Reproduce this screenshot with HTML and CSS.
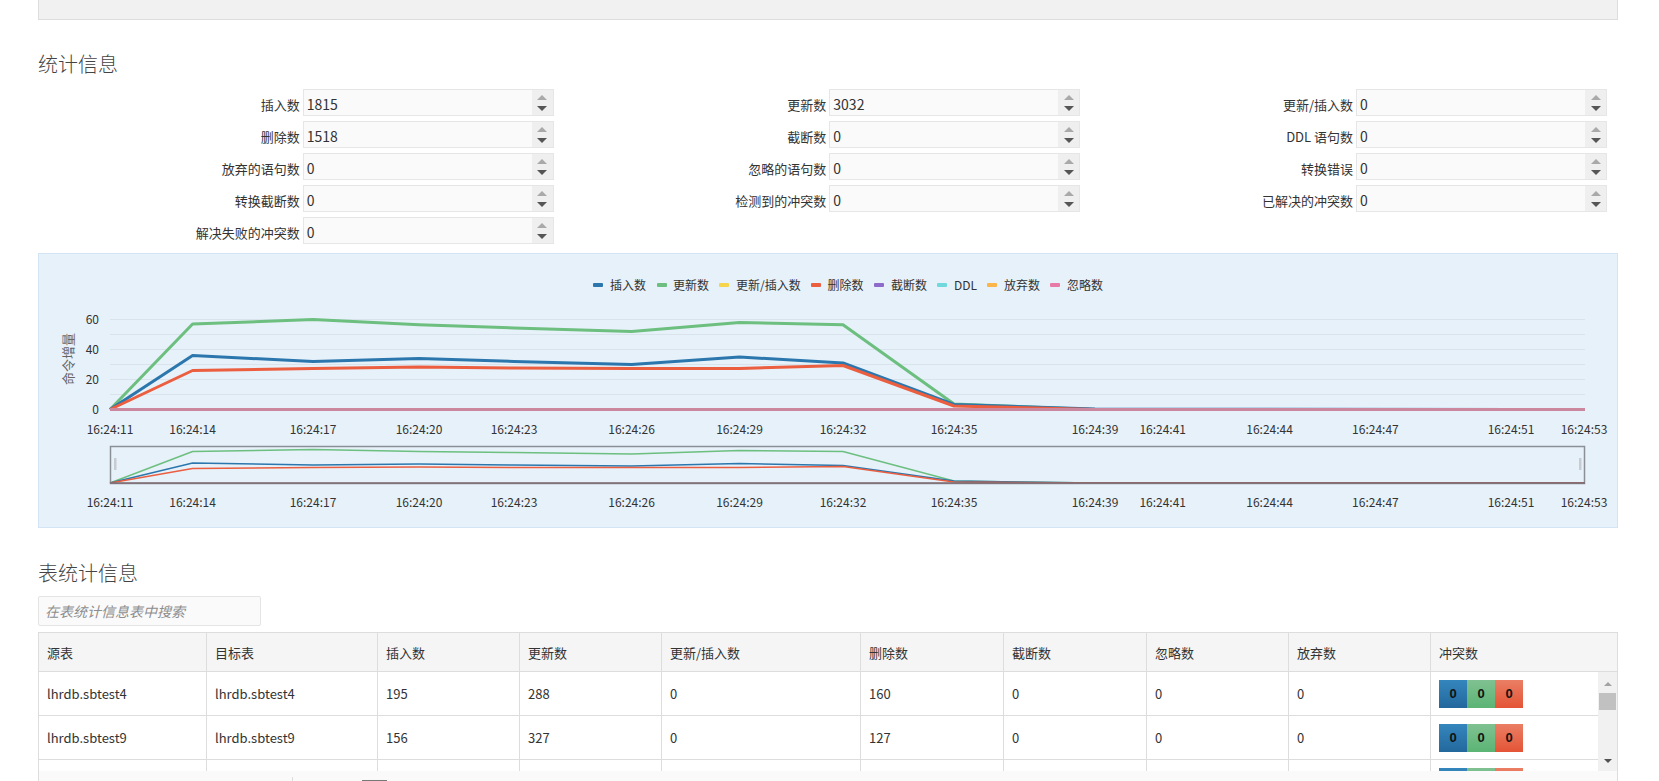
FILE: index.html
```html
<!DOCTYPE html>
<html lang="zh-CN">
<head>
<meta charset="utf-8">
<title>统计信息</title>
<link rel="stylesheet" href="styles.css">
</head>
<body>
<div class="page">
  <div class="topbox"></div>

  <h3 class="section-title title-stats">统计信息</h3>

  <div class="stats-grid">
    <div class="stats-col">
      <div class="stat-row"><span class="stat-label">插入数</span><div class="num-box"><span class="num-val">1815</span><span class="spin"><i class="up"></i><i class="down"></i></span></div></div>
      <div class="stat-row"><span class="stat-label">删除数</span><div class="num-box"><span class="num-val">1518</span><span class="spin"><i class="up"></i><i class="down"></i></span></div></div>
      <div class="stat-row"><span class="stat-label">放弃的语句数</span><div class="num-box"><span class="num-val">0</span><span class="spin"><i class="up"></i><i class="down"></i></span></div></div>
      <div class="stat-row"><span class="stat-label">转换截断数</span><div class="num-box"><span class="num-val">0</span><span class="spin"><i class="up"></i><i class="down"></i></span></div></div>
      <div class="stat-row"><span class="stat-label">解决失败的冲突数</span><div class="num-box"><span class="num-val">0</span><span class="spin"><i class="up"></i><i class="down"></i></span></div></div>
    </div>
    <div class="stats-col">
      <div class="stat-row"><span class="stat-label">更新数</span><div class="num-box"><span class="num-val">3032</span><span class="spin"><i class="up"></i><i class="down"></i></span></div></div>
      <div class="stat-row"><span class="stat-label">截断数</span><div class="num-box"><span class="num-val">0</span><span class="spin"><i class="up"></i><i class="down"></i></span></div></div>
      <div class="stat-row"><span class="stat-label">忽略的语句数</span><div class="num-box"><span class="num-val">0</span><span class="spin"><i class="up"></i><i class="down"></i></span></div></div>
      <div class="stat-row"><span class="stat-label">检测到的冲突数</span><div class="num-box"><span class="num-val">0</span><span class="spin"><i class="up"></i><i class="down"></i></span></div></div>
    </div>
    <div class="stats-col">
      <div class="stat-row"><span class="stat-label">更新/插入数</span><div class="num-box"><span class="num-val">0</span><span class="spin"><i class="up"></i><i class="down"></i></span></div></div>
      <div class="stat-row"><span class="stat-label">DDL 语句数</span><div class="num-box"><span class="num-val">0</span><span class="spin"><i class="up"></i><i class="down"></i></span></div></div>
      <div class="stat-row"><span class="stat-label">转换错误</span><div class="num-box"><span class="num-val">0</span><span class="spin"><i class="up"></i><i class="down"></i></span></div></div>
      <div class="stat-row"><span class="stat-label">已解决的冲突数</span><div class="num-box"><span class="num-val">0</span><span class="spin"><i class="up"></i><i class="down"></i></span></div></div>
    </div>
  </div>

  <div class="chart-panel">
    <svg class="chart" width="1578" height="273" viewBox="39 254 1578 273" xmlns="http://www.w3.org/2000/svg">
      <g class="legend">
        <rect x="593" y="283" width="10" height="4" rx="1" fill="#2b77ad"/><text x="610" y="289.5">插入数</text>
        <rect x="657" y="283" width="10" height="4" rx="1" fill="#6cbf7f"/><text x="673" y="289.5">更新数</text>
        <rect x="719" y="283" width="10" height="4" rx="1" fill="#f6d44c"/><text x="736" y="289.5">更新/插入数</text>
        <rect x="811" y="283" width="10" height="4" rx="1" fill="#eb5e3f"/><text x="827.5" y="289.5">删除数</text>
        <rect x="874" y="283" width="10" height="4" rx="1" fill="#8e6bcb"/><text x="891" y="289.5">截断数</text>
        <rect x="937" y="283" width="10" height="4" rx="1" fill="#70d9dc"/><text x="954" y="289.5">DDL</text>
        <rect x="987" y="283" width="10" height="4" rx="1" fill="#fbb54b"/><text x="1004" y="289.5">放弃数</text>
        <rect x="1050" y="283" width="10" height="4" rx="1" fill="#e87aa7"/><text x="1067" y="289.5">忽略数</text>
      </g>
      <g stroke="#d9e3ec" stroke-width="1">
        <line x1="110" y1="319.5" x2="1585" y2="319.5"/>
        <line x1="110" y1="334.5" x2="1585" y2="334.5"/>
        <line x1="110" y1="349.5" x2="1585" y2="349.5"/>
        <line x1="110" y1="364.5" x2="1585" y2="364.5"/>
        <line x1="110" y1="379.5" x2="1585" y2="379.5"/>
        <line x1="110" y1="394.5" x2="1585" y2="394.5"/>
      </g>
      <g class="ylab">
        <text x="99" y="324">60</text>
        <text x="99" y="354">40</text>
        <text x="99" y="384">20</text>
        <text x="99" y="414">0</text>
      </g>
      <text class="yname" transform="translate(73 359) rotate(-90)">命令增量</text>
      <g fill="none" stroke-linejoin="round" stroke-width="3">
        <polyline stroke="#6cbf7f" points="110,409.5 192.6,324 313,319.5 419,324.8 514,328 631.6,331.5 739.5,322.5 843,324.8 954,404 1095,409.5 1585,409.5"/>
        <polyline stroke="#2b77ad" points="110,409.5 192.6,355.5 313,361.5 419,358.5 514,361.5 631.6,364.5 739.5,357 843,363 954,404.5 1095,409 1585,409.5"/>
        <polyline stroke="#eb5e3f" points="110,409.5 192.6,370.5 313,368.5 419,367 514,368 631.6,368.5 739.5,368.5 843,365.5 954,406 1095,409.5 1585,409.5"/>
        <line x1="110" y1="409.5" x2="1585" y2="409.5" stroke="#cb879d"/>
      </g>
      <g class="xlab">
        <text x="110" y="434">16:24:11</text>
        <text x="192.6" y="434">16:24:14</text>
        <text x="313" y="434">16:24:17</text>
        <text x="419" y="434">16:24:20</text>
        <text x="514" y="434">16:24:23</text>
        <text x="631.6" y="434">16:24:26</text>
        <text x="739.5" y="434">16:24:29</text>
        <text x="843" y="434">16:24:32</text>
        <text x="954" y="434">16:24:35</text>
        <text x="1095" y="434">16:24:39</text>
        <text x="1162.7" y="434">16:24:41</text>
        <text x="1269.6" y="434">16:24:44</text>
        <text x="1375.4" y="434">16:24:47</text>
        <text x="1511" y="434">16:24:51</text>
        <text x="1584" y="434">16:24:53</text>
      </g>
      <g fill="none" stroke-width="1.5" stroke-linejoin="round">
        <polyline stroke="#6cbf7f" points="110,483 192.6,451.5 313,449.5 419,451.5 514,452.5 631.6,454 739.5,450.5 843,451.5 954,481 1095,483 1585,483"/>
        <polyline stroke="#2b77ad" points="110,483 192.6,463 313,465 419,464 514,465 631.6,466 739.5,463.5 843,465.5 954,481 1095,483 1585,483"/>
        <polyline stroke="#eb5e3f" points="110,483 192.6,468.5 313,467.5 419,467 514,467.5 631.6,467.5 739.5,467.5 843,466.5 954,482 1095,483 1585,483"/>
      </g>
      <rect x="110.5" y="446.5" width="1474" height="37" fill="none" stroke="#8b9096" stroke-width="1.5"/>
      <line x1="110" y1="483" x2="1585" y2="483" stroke="#7e6a70" stroke-width="1.5"/>
      <rect x="114" y="458" width="2.5" height="12" fill="#c8ccd1"/>
      <rect x="1579" y="458" width="2.5" height="12" fill="#c8ccd1"/>
      <g class="xlab">
        <text x="110" y="507">16:24:11</text>
        <text x="192.6" y="507">16:24:14</text>
        <text x="313" y="507">16:24:17</text>
        <text x="419" y="507">16:24:20</text>
        <text x="514" y="507">16:24:23</text>
        <text x="631.6" y="507">16:24:26</text>
        <text x="739.5" y="507">16:24:29</text>
        <text x="843" y="507">16:24:32</text>
        <text x="954" y="507">16:24:35</text>
        <text x="1095" y="507">16:24:39</text>
        <text x="1162.7" y="507">16:24:41</text>
        <text x="1269.6" y="507">16:24:44</text>
        <text x="1375.4" y="507">16:24:47</text>
        <text x="1511" y="507">16:24:51</text>
        <text x="1584" y="507">16:24:53</text>
      </g>
    </svg>
  </div>

  <h3 class="section-title title-table">表统计信息</h3>
  <input class="search" type="text" placeholder="在表统计信息表中搜索">

  <div class="table-wrap">
    <div class="thead">
      <div class="th c1">源表</div>
      <div class="th c2">目标表</div>
      <div class="th c3">插入数</div>
      <div class="th c4">更新数</div>
      <div class="th c5">更新/插入数</div>
      <div class="th c6">删除数</div>
      <div class="th c7">截断数</div>
      <div class="th c8">忽略数</div>
      <div class="th c9">放弃数</div>
      <div class="th c10">冲突数</div>
    </div>
    <div class="tbody">
      <div class="rows">
        <div class="tr">
          <div class="td c1">lhrdb.sbtest4</div><div class="td c2">lhrdb.sbtest4</div><div class="td c3">195</div><div class="td c4">288</div><div class="td c5">0</div><div class="td c6">160</div><div class="td c7">0</div><div class="td c8">0</div><div class="td c9">0</div>
          <div class="td c10b"><span class="badge b-blue">0</span><span class="badge b-green">0</span><span class="badge b-red">0</span></div>
        </div>
        <div class="tr">
          <div class="td c1">lhrdb.sbtest9</div><div class="td c2">lhrdb.sbtest9</div><div class="td c3">156</div><div class="td c4">327</div><div class="td c5">0</div><div class="td c6">127</div><div class="td c7">0</div><div class="td c8">0</div><div class="td c9">0</div>
          <div class="td c10b"><span class="badge b-blue">0</span><span class="badge b-green">0</span><span class="badge b-red">0</span></div>
        </div>
        <div class="tr">
          <div class="td c1"></div><div class="td c2"></div><div class="td c3"></div><div class="td c4"></div><div class="td c5"></div><div class="td c6"></div><div class="td c7"></div><div class="td c8"></div><div class="td c9"></div>
          <div class="td c10b"><span class="badge b-blue"></span><span class="badge b-green"></span><span class="badge b-red"></span></div>
        </div>
      </div>
      <div class="vscroll">
        <i class="sc-up"></i>
        <span class="sc-thumb"></span>
        <span class="sc-space"></span>
        <i class="sc-down"></i>
      </div>
    </div>
    <div class="tfoot">
      <div class="tfoot-left"></div>
      <div class="tfoot-box"></div>
    </div>
  </div>
</div>
</body>
</html>
```

FILE: styles.css
```css
html, body {
  margin: 0;
  padding: 0;
  background: #ffffff;
}
body {
  font-family: "Noto Sans CJK SC", "Noto Sans", sans-serif;
  color: #333333;
  height: 781px;
  overflow: hidden;
}
.page {
  width: 1580px;
  margin-left: 38px;
}
.topbox {
  height: 20px;
  background: #f1f1f1;
  border: 1px solid #dddddd;
  border-top: none;
  box-sizing: border-box;
}
.section-title {
  margin: 0;
  font-size: 20px;
  line-height: 28px;
  font-weight: 300;
  color: #444444;
}
.title-stats {
  margin-top: 30px;
}
.stats-grid {
  display: grid;
  grid-template-columns: 1fr 1fr 1fr;
  margin-top: 11px;
}
.stats-col {
  display: flex;
  flex-direction: column;
  gap: 5px;
}
.stat-row {
  display: flex;
  align-items: center;
  height: 27px;
}
.stat-label {
  flex: 1;
  text-align: right;
  padding-right: 3px;
  padding-top: 3px;
  font-size: 13px;
  color: #333333;
}
.num-box {
  width: 251px;
  height: 27px;
  margin-right: 11px;
  box-sizing: border-box;
  border: 1px solid #e6e6e6;
  background: #fafafa;
  display: flex;
}
.num-val {
  flex: 1;
  padding-left: 3px;
  padding-top: 4px;
  font-size: 14px;
  line-height: 20px;
  color: #333333;
}
.spin {
  width: 21px;
  background: #efefef;
  display: flex;
  flex-direction: column;
  align-items: center;
  justify-content: center;
  gap: 6px;
}
.spin .up {
  width: 0;
  height: 0;
  border-left: 5px solid transparent;
  border-right: 5px solid transparent;
  border-bottom: 5px solid #a9a9a9;
}
.spin .down {
  width: 0;
  height: 0;
  border-left: 5px solid transparent;
  border-right: 5px solid transparent;
  border-top: 5px solid #555555;
}

.chart-panel {
  margin-top: 9px;
  height: 275px;
  box-sizing: border-box;
  border: 1px solid #d3e5f5;
  background: #e7f1fa;
}
.chart {
  display: block;
  font-family: "Noto Sans CJK SC", "Noto Sans", sans-serif;
}
.legend text {
  font-size: 12px;
  fill: #333333;
}
.ylab text {
  font-size: 12px;
  fill: #333333;
  text-anchor: end;
}
.yname {
  font-size: 13px;
  fill: #666666;
  text-anchor: middle;
}
.xlab text {
  font-size: 12px;
  fill: #333333;
  text-anchor: middle;
}

.title-table {
  margin-top: 31px;
}
.search {
  display: block;
  margin-top: 9px;
  width: 223px;
  height: 30px;
  box-sizing: border-box;
  border: 1px solid #e4e4e4;
  border-radius: 2px;
  background: #fafafa;
  padding: 0 6px;
  font-family: "Noto Sans CJK SC", "Noto Sans", sans-serif;
  font-size: 14px;
  color: #333333;
  outline: none;
}
.search::placeholder {
  color: #8e8e8e;
  font-style: italic;
}

.table-wrap {
  margin-top: 6px;
  border: 1px solid #dddddd;
  border-bottom: none;
  box-sizing: border-box;
}
.thead {
  display: flex;
  height: 38px;
  background: #f5f5f5;
  border-bottom: 1px solid #dddddd;
}
.th, .td {
  box-sizing: border-box;
  padding-left: 8px;
  font-size: 13px;
  color: #333333;
  display: flex;
  align-items: center;
  border-right: 1px solid #dddddd;
  white-space: nowrap;
  overflow: hidden;
}
.th {
  height: 38px;
}
.c1 { width: 168px; }
.c2 { width: 171px; }
.c3 { width: 142px; }
.c4 { width: 142px; }
.c5 { width: 199px; }
.c6 { width: 143px; }
.c7 { width: 143px; }
.c8 { width: 142px; }
.c9 { width: 142px; }
.c10 { width: 186px; border-right: none; }
.c10b { width: 167px; border-right: none; }

.tbody {
  display: flex;
  height: 99px;
  overflow: hidden;
}
.rows {
  width: 1559px;
}
.tr {
  display: flex;
  height: 43px;
  border-bottom: 1px solid #dddddd;
}
.td {
  height: 43px;
}
.badge {
  width: 28px;
  height: 28px;
  display: inline-flex;
  align-items: center;
  justify-content: center;
  font-family: "Liberation Sans", Arial, sans-serif;
  font-size: 13px;
  font-weight: 700;
  color: #111111;
}
.b-blue { background: linear-gradient(#3486bd, #23689d); }
.b-green { background: linear-gradient(#80c192, #5bb474); }
.b-red { background: linear-gradient(#ea7e64, #e45436); }

.vscroll {
  width: 19px;
  background: #f1f1f1;
  display: flex;
  flex-direction: column;
  align-items: center;
}
.sc-up {
  margin-top: 10px;
  width: 0;
  height: 0;
  border-left: 4px solid transparent;
  border-right: 4px solid transparent;
  border-bottom: 4px solid #a3a3a3;
}
.sc-thumb {
  margin-top: 7px;
  width: 17px;
  height: 17px;
  background: #c1c1c1;
}
.sc-space {
  flex: 1;
}
.sc-down {
  margin-bottom: 8px;
  width: 0;
  height: 0;
  border-left: 4px solid transparent;
  border-right: 4px solid transparent;
  border-top: 4px solid #505050;
}
.tfoot {
  display: flex;
  height: 40px;
  background: #fafafa;
  padding-top: 6px;
  box-sizing: border-box;
}
.tfoot-left {
  width: 253px;
  border-right: 1px solid #dddddd;
}
.tfoot-box {
  margin-left: 69px;
  margin-top: 3px;
  width: 23px;
  height: 24px;
  border: 1px solid #777777;
  background: #ffffff;
}
```
